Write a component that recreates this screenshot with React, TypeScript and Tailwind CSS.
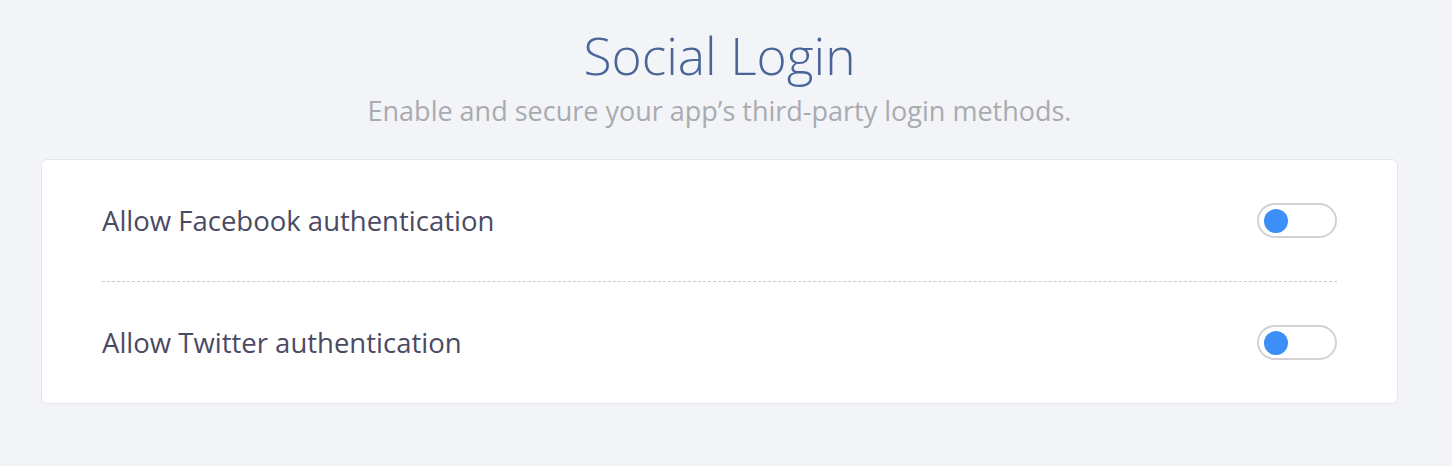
export default function App() {
  const rows = ["Allow Facebook authentication", "Allow Twitter authentication"];
  return (
    <div
      className="min-h-[466px] w-full bg-[#f3f4f8] pl-[41px] pr-[54px] pt-[22px]"
      style={{ fontFamily: '"Open Sans", "Noto Sans", sans-serif' }}
    >
      <h1 className="text-center text-[51.5px] font-light leading-[66px] text-[#4a6699]">
        Social Login
      </h1>
      <p className="mt-[5px] text-center text-[27px] leading-[36px] text-[#a9abb0]">
        Enable and secure your app’s third-party login methods.
      </p>
      <div className="mt-[30px] rounded-[6px] border border-[#e4e6ea] bg-white px-[60px]">
        {rows.map((label, i) => (
          <div key={label}>
            {i > 0 && <div className="border-t border-dashed border-[#c9cad0]" />}
            <div className="flex h-[121px] items-center justify-between">
              <span className="text-[27.5px] text-[#4b4a63]">{label}</span>
              <button className="flex h-[35px] w-[80px] items-center rounded-full border-2 border-[#d2d2d4] bg-white pl-[5px]">
                <span className="block h-[24px] w-[24px] rounded-full bg-[#3b8ff6]" />
              </button>
            </div>
          </div>
        ))}
      </div>
    </div>
  );
}
